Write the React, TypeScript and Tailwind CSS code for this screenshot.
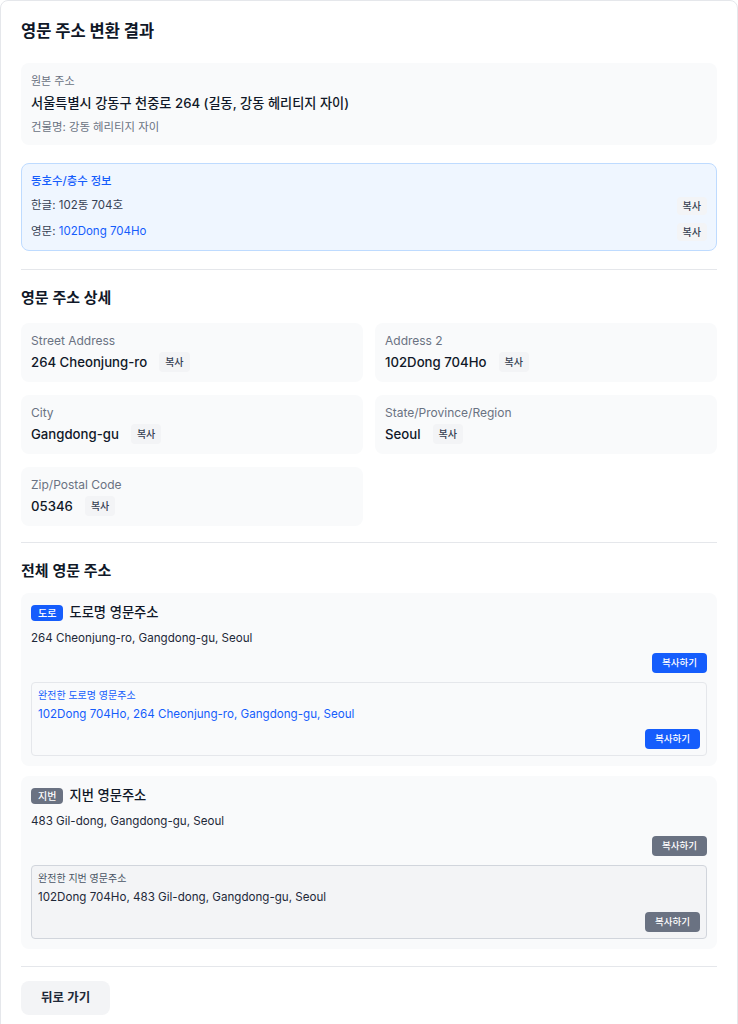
import React from 'react';

interface DetailItemProps {
  label: string;
  value: string;
}

const CopyChip: React.FC<{ size?: 'sm' | 'md' }> = ({ size = 'md' }) => (
  <button
    className={`inline-flex items-center rounded bg-gray-100 px-1.5 text-[10px] font-medium leading-none text-gray-700 ${
      size === 'sm' ? 'h-[18px]' : 'h-5'
    }`}
  >
    복사
  </button>
);

const DetailItem: React.FC<DetailItemProps> = ({ label, value }) => (
  <div className="rounded-lg bg-gray-50 p-2.5">
    <div className="text-[12px] leading-4 text-gray-500">{label}</div>
    <div className="mt-[3px] flex items-center gap-3">
      <span className="text-[13.2px] font-medium leading-5 text-gray-900">{value}</span>
      <CopyChip />
    </div>
  </div>
);

const variants = {
  road: {
    badge: 'bg-blue-600',
    button: 'bg-blue-600',
    inner: 'bg-gray-50 border-gray-200',
    innerLabel: 'text-blue-600',
    innerValue: 'text-blue-600',
  },
  lot: {
    badge: 'bg-gray-500',
    button: 'bg-gray-500',
    inner: 'bg-gray-100 border-gray-300',
    innerLabel: 'text-gray-600',
    innerValue: 'text-gray-800',
  },
};

interface FullAddressProps {
  kind: 'road' | 'lot';
  badge: string;
  title: string;
  address: string;
  fullLabel: string;
  fullAddress: string;
}

const CopyButton: React.FC<{ color: string }> = ({ color }) => (
  <button
    className={`inline-flex h-5 items-center rounded px-2.5 text-[9.5px] font-medium leading-none text-white ${color}`}
  >
    복사하기
  </button>
);

const FullAddress: React.FC<FullAddressProps> = ({ kind, badge, title, address, fullLabel, fullAddress }) => {
  const v = variants[kind];
  return (
    <div className="rounded-lg bg-gray-50 p-2.5">
      <div className="flex h-5 items-center gap-1.5">
        <span className={`inline-flex h-4 items-center rounded px-[7px] text-[10px] font-medium leading-none text-white ${v.badge}`}>
          {badge}
        </span>
        <span className="text-[13.3px] font-medium text-gray-900">{title}</span>
      </div>
      <div className="mt-[7px] text-[11.6px] leading-4 text-gray-800">{address}</div>
      <div className="mt-[7px] flex justify-end">
        <CopyButton color={v.button} />
      </div>
      <div className={`mt-[9px] rounded border p-1.5 ${v.inner}`}>
        <div className={`text-[10px] leading-[13px] ${v.innerLabel}`}>{fullLabel}</div>
        <div className={`mt-1 text-[11.6px] leading-4 ${v.innerValue}`}>{fullAddress}</div>
        <div className="mt-[7px] flex justify-end">
          <CopyButton color={v.button} />
        </div>
      </div>
    </div>
  );
};

export default function App() {
  return (
    <div className="h-[1024px] overflow-hidden bg-white font-['Inter','Noto_Sans_CJK_KR',sans-serif]">
      <div className="rounded-lg border border-gray-200 bg-white px-5 pt-5 pb-6">
        <h1 className="text-[16.5px] font-bold leading-5 text-gray-900">영문 주소 변환 결과</h1>

        {/* 원본 주소 */}
        <div className="mt-[22px] rounded-lg bg-gray-50 p-2.5">
          <div className="text-[11px] leading-4 text-gray-500">원본 주소</div>
          <div className="mt-1 text-[13.2px] font-medium leading-5 text-gray-900">
            서울특별시 강동구 천중로 264 (길동, 강동 헤리티지 자이)
          </div>
          <div className="mt-1.5 text-[11.4px] leading-4 text-gray-500">건물명: 강동 헤리티지 자이</div>
        </div>

        {/* 동호수 */}
        <div className="mt-[18px] rounded-lg border border-blue-200 bg-blue-50 p-[9px]">
          <div className="text-[11.4px] font-medium leading-4 text-blue-600">동호수/층수 정보</div>
          <div className="mt-2 space-y-2">
            <div className="flex items-center justify-between text-[11.5px] text-gray-700">
              <span>한글: 102동 704호</span>
              <CopyChip size="sm" />
            </div>
            <div className="flex items-center justify-between text-[11.5px] text-gray-700">
              <span>
                영문: <span className="text-blue-600">102Dong 704Ho</span>
              </span>
              <CopyChip size="sm" />
            </div>
          </div>
        </div>

        {/* 영문 주소 상세 */}
        <div className="mt-[18px] border-t border-gray-200 pt-4">
          <h2 className="text-[15px] font-semibold leading-6 text-gray-900">영문 주소 상세</h2>
          <div className="mt-[13px] grid grid-cols-2 gap-x-3 gap-y-[13px]">
            <DetailItem label="Street Address" value="264 Cheonjung-ro" />
            <DetailItem label="Address 2" value="102Dong 704Ho" />
            <DetailItem label="City" value="Gangdong-gu" />
            <DetailItem label="State/Province/Region" value="Seoul" />
            <DetailItem label="Zip/Postal Code" value="05346" />
          </div>
        </div>

        {/* 전체 영문 주소 */}
        <div className="mt-4 border-t border-gray-200 pt-4">
          <h2 className="text-[15px] font-semibold leading-6 text-gray-900">전체 영문 주소</h2>
          <div className="mt-2.5 space-y-2.5">
            <FullAddress
              kind="road"
              badge="도로"
              title="도로명 영문주소"
              address="264 Cheonjung-ro, Gangdong-gu, Seoul"
              fullLabel="완전한 도로명 영문주소"
              fullAddress="102Dong 704Ho, 264 Cheonjung-ro, Gangdong-gu, Seoul"
            />
            <FullAddress
              kind="lot"
              badge="지번"
              title="지번 영문주소"
              address="483 Gil-dong, Gangdong-gu, Seoul"
              fullLabel="완전한 지번 영문주소"
              fullAddress="102Dong 704Ho, 483 Gil-dong, Gangdong-gu, Seoul"
            />
          </div>
        </div>

        <div className="mt-[17px] border-t border-gray-200 pt-[14px]">
          <button className="h-[34px] rounded-lg bg-gray-100 px-5 text-[12.5px] font-semibold text-gray-800">
            뒤로 가기
          </button>
        </div>
      </div>
    </div>
  );
}
